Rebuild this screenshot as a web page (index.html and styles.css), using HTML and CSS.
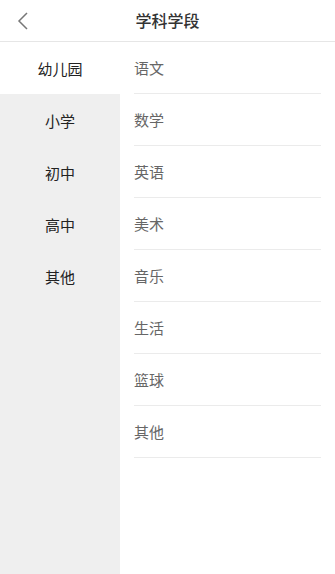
FILE: index.html
```html
<!DOCTYPE html>
<html lang="zh-CN">
<head>
<meta charset="utf-8">
<title>学科学段</title>
<link rel="stylesheet" href="styles.css">
</head>
<body>
<div class="page">
  <header class="header">
    <span class="back">
      <svg width="12" height="18" viewBox="0 0 12 18"><path d="M10 1 L2 9 L10 17" fill="none" stroke="#777" stroke-width="1.5"/></svg>
    </span>
    <h1 class="title">学科学段</h1>
  </header>
  <div class="body">
    <ul class="stages">
      <li class="stage active">幼儿园</li>
      <li class="stage">小学</li>
      <li class="stage">初中</li>
      <li class="stage">高中</li>
      <li class="stage">其他</li>
    </ul>
    <ul class="subjects">
      <li class="subject">语文</li>
      <li class="subject">数学</li>
      <li class="subject">英语</li>
      <li class="subject">美术</li>
      <li class="subject">音乐</li>
      <li class="subject">生活</li>
      <li class="subject">篮球</li>
      <li class="subject">其他</li>
    </ul>
  </div>
</div>
</body>
</html>
```
FILE: styles.css
```css
* { box-sizing: border-box; }
html, body { margin: 0; padding: 0; background: #fff; }
body {
  font-family: "Noto Sans CJK SC", "Noto Sans", sans-serif;
  width: 335px;
  height: 574px;
  overflow: hidden;
}
.page { display: flex; flex-direction: column; height: 574px; }
.header {
  position: relative;
  height: 42px;
  border-bottom: 1px solid #e6e6e6;
  display: flex;
  align-items: center;
  justify-content: center;
  flex-shrink: 0;
}
.back {
  position: absolute;
  left: 17px;
  top: 12px;
  display: flex;
}
.title {
  margin: 0;
  font-size: 16px;
  font-weight: 500;
  color: #333;
  line-height: 1;
  margin-top: -2px;
}
.body { display: flex; flex: 1; }
ul { list-style: none; margin: 0; padding: 0; }
.stages {
  width: 120px;
  background: #efefef;
  flex-shrink: 0;
}
.stage {
  height: 52px;
  display: flex;
  align-items: center;
  justify-content: center;
  font-size: 15px;
  color: #222;
  font-weight: 400;
}
.stage.active { background: #fff; }
.subjects {
  flex: 1;
  padding: 0 14px 0 14px;
}
.subject {
  height: 52px;
  display: flex;
  align-items: center;
  font-size: 15px;
  color: #666;
  border-bottom: 1px solid #ebebeb;
  padding-bottom: 1px;
}
```
